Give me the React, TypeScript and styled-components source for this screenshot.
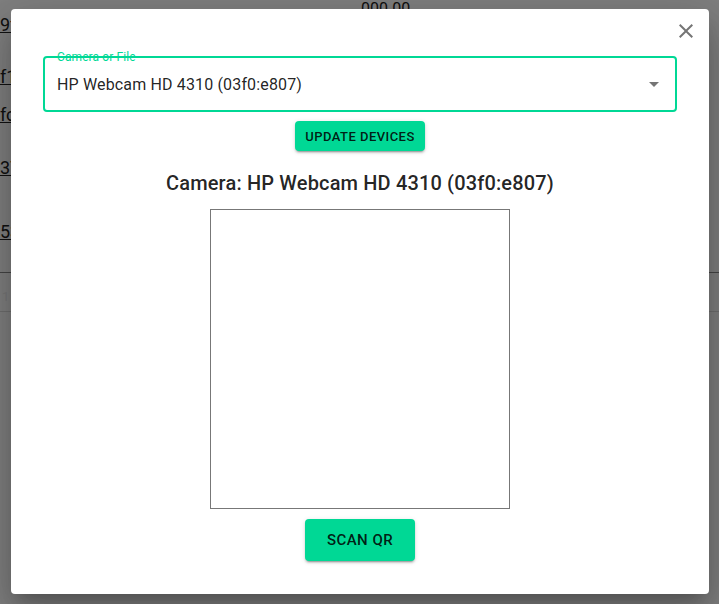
import React from "react";
import styled, { createGlobalStyle } from "styled-components";

const GREEN = "#00d895";

const Global = createGlobalStyle`
  html, body { margin: 0; padding: 0; background: #fff; }
  body { font-family: Roboto, "Liberation Sans", Arial, sans-serif; overflow: hidden; }
`;

/* ---------- background page ---------- */
const Page = styled.div`
  width: 719px;
  height: 604px;
  position: relative;
  overflow: hidden;
  background: #fff;
  color: #222;
  font-size: 16px;
`;

const Amount = styled.div`
  height: 15px;
  line-height: 18px;
  padding-left: 361px;
  font-size: 16px;
  overflow: visible;
`;

const HashRow = styled.div<{ $h: number }>`
  height: ${(p) => p.$h}px;
  line-height: 20px;
`;

const HashLink = styled.a`
  color: #222;
  text-decoration: underline;
  font-size: 18px;
`;

const Divider = styled.div`
  border-top: 1px solid #8a8a8a;
`;

const PagerRow = styled.div`
  height: 39px;
  box-sizing: border-box;
  padding: 16px 0 0 2px;
  line-height: 16px;
  color: #eee;
  font-size: 13px;
  border-bottom: 1px solid #ddd;
`;

const Backdrop = styled.div`
  position: absolute;
  inset: 0;
  background: rgba(0, 0, 0, 0.5);
`;

/* ---------- dialog ---------- */
const Dialog = styled.div`
  position: absolute;
  left: 11px;
  top: 9px;
  width: 698px;
  height: 585px;
  box-sizing: border-box;
  background: #fff;
  border-radius: 4px;
  box-shadow: 0 11px 15px -7px rgba(0, 0, 0, 0.2), 0 24px 38px 3px rgba(0, 0, 0, 0.14),
    0 9px 46px 8px rgba(0, 0, 0, 0.12);
  padding: 0 32px;
  display: flex;
  flex-direction: column;
  align-items: center;
`;

const Header = styled.div`
  align-self: stretch;
  height: 47px;
  display: flex;
  justify-content: flex-end;
  align-items: flex-start;
  padding-top: 10px;
  box-sizing: border-box;
  margin-right: -21px;
`;

const CloseButton = styled.button`
  border: 0;
  background: none;
  padding: 0;
  width: 24px;
  height: 24px;
  color: #757575;
  cursor: pointer;
  display: flex;
`;

const SelectField = styled.div`
  position: relative;
  align-self: stretch;
  height: 56px;
  box-sizing: border-box;
  border: 2px solid ${GREEN};
  border-radius: 4px;
  display: flex;
  align-items: center;
  padding: 0 12px;
`;

const FloatingLabel = styled.label`
  position: absolute;
  left: 12px;
  top: -9px;
  font-size: 12px;
  line-height: 16px;
  color: ${GREEN};
  letter-spacing: 0.1px;
`;

const SelectValue = styled.div`
  flex: 1;
  font-size: 16px;
  color: rgba(0, 0, 0, 0.87);
  letter-spacing: 0.15px;
  padding-top: 1px;
`;

const ArrowIcon = styled.svg`
  width: 24px;
  height: 24px;
  margin-right: -3px;
  fill: #757575;
`;

const Button = styled.button<{ $size: "small" | "large" }>`
  border: 0;
  border-radius: 4px;
  background: ${GREEN};
  color: rgba(0, 0, 0, 0.87);
  font-family: Roboto, "Liberation Sans", Arial, sans-serif;
  font-weight: 500;
  text-transform: uppercase;
  box-shadow: 0 3px 1px -2px rgba(0, 0, 0, 0.2), 0 2px 2px 0 rgba(0, 0, 0, 0.14),
    0 1px 5px 0 rgba(0, 0, 0, 0.12);
  cursor: pointer;
  font-size: ${(p) => (p.$size === "small" ? "13px" : "15px")};
  letter-spacing: 0.46px;
  height: ${(p) => (p.$size === "small" ? "30px" : "42px")};
  padding: ${(p) => (p.$size === "small" ? "0 10px" : "0 22px")};
`;

const UpdateButton = styled(Button)`
  margin-top: 9px;
`;

const Title = styled.h2`
  margin: 16px 0 10px;
  font-size: 20px;
  line-height: 32px;
  font-weight: 500;
  color: rgba(0, 0, 0, 0.87);
  letter-spacing: 0.15px;
`;

const Viewport = styled.div`
  width: 300px;
  height: 300px;
  box-sizing: border-box;
  border: 1px solid #777;
`;

const ScanButton = styled(Button)`
  margin-top: 10px;
`;

const hashes: { text: string; h: number }[] = [
  { text: "9f1", h: 52 },
  { text: "f1a", h: 38 },
  { text: "fc7", h: 53 },
  { text: "37b", h: 64 },
  { text: "53d", h: 50 },
];

export default function App() {
  return (
    <Page>
      <Global />
      <Amount>000.00</Amount>
      {hashes.map((r) => (
        <HashRow key={r.text} $h={r.h}>
          <HashLink href="#">{r.text}</HashLink>
        </HashRow>
      ))}
      <Divider />
      <PagerRow>1</PagerRow>
      <Backdrop />
      <Dialog role="dialog">
        <Header>
          <CloseButton aria-label="close">
            <svg viewBox="0 0 24 24" width="24" height="24" fill="currentColor">
              <path d="M19 6.41 17.59 5 12 10.59 6.41 5 5 6.41 10.59 12 5 17.59 6.41 19 12 13.41 17.59 19 19 17.59 13.41 12z" />
            </svg>
          </CloseButton>
        </Header>
        <SelectField>
          <FloatingLabel>Camera or File</FloatingLabel>
          <SelectValue>HP Webcam HD 4310 (03f0:e807)</SelectValue>
          <ArrowIcon viewBox="0 0 24 24">
            <path d="M7 10l5 5 5-5z" />
          </ArrowIcon>
        </SelectField>
        <UpdateButton $size="small">Update Devices</UpdateButton>
        <Title>Camera: HP Webcam HD 4310 (03f0:e807)</Title>
        <Viewport />
        <ScanButton $size="large">Scan QR</ScanButton>
      </Dialog>
    </Page>
  );
}
